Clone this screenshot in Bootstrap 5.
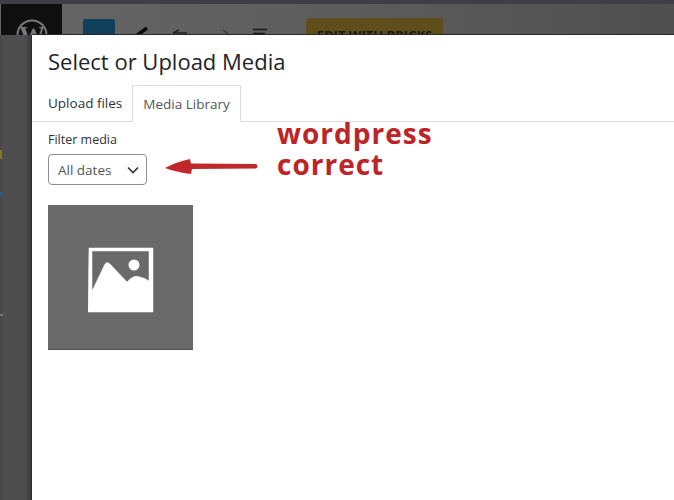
<!DOCTYPE html>
<html lang="en"><head><meta charset="utf-8"><title>Select or Upload Media</title>
<link href="https://cdn.jsdelivr.net/npm/bootstrap@5.3.0/dist/css/bootstrap.min.css" rel="stylesheet">
<style>
html,body{margin:0;height:500px;overflow:hidden;background:#4d4d4d}
body{font-family:"Open Sans","Noto Sans",sans-serif}
.stage{width:674px;height:500px;position:relative;overflow:hidden}
.topstrip{height:4px;background:#3e3e4a}
.editorbar{height:31px;background:linear-gradient(90deg,#666 0,#5e5e5e 300px,#4f4f4f 674px);overflow:hidden}
.wpbox{width:61px;height:31px;margin-left:1px;background:#0f0f0f;color:#7a7a7a;padding-top:15px}
.addbtn{width:32px;height:16px;margin:15px 0 0 21px;background:#10405c;border-radius:2px 2px 0 0}
.toolset{margin-left:20px;flex:none}
.brickbtn{width:137px;height:17px;margin:14px 0 0 31px;background:#5f4e1c;border-radius:3px 3px 0 0;font:700 13px/17px "Open Sans",sans-serif;color:#161616;padding-top:9px;text-align:center;white-space:nowrap;overflow:hidden;flex:none}
.lowerbg{height:465px;width:32px;background:
 linear-gradient(#8a7426,#8a7426) 0 115px/2px 9px no-repeat,
 linear-gradient(#2c5f94,#2c5f94) 0 157px/2px 4px no-repeat,
 linear-gradient(#777,#777) 0 279px/3px 2px no-repeat,
 linear-gradient(90deg,#454549 0,#4e4e4e 10%,#4e4e4e 75%,#3f3f3f 94%,#2c2c2c 100%)}
.dialog{position:absolute;left:32px;top:35px;width:642px;height:465px;background:#fff;color:#1d2327;box-shadow:0 -1px 0 #2a2a2a}
.dlgtitle{font-size:22px;font-weight:400;line-height:30px;margin:0;padding:11px 16px 9px;color:#1d2327;font-family:"Open Sans",sans-serif}
.tabrow{height:37px;border-bottom:1px solid #dcdcde;padding-left:8px}
.tabitem{font-size:13.5px;line-height:20px;padding:8px 10px 8px 8px;color:#2c3338}
.tabitem.current{border:1px solid #dcdcde;border-bottom:0;background:#fff;height:37px;padding:8px 10px;color:#50575e}
.filterarea{padding:9px 16px 0;position:relative}
.filterlabel{font-size:12.5px;font-weight:500;line-height:17px;color:#2c3338;margin:0 0 6px}
.dateselect{width:99px;height:31px;border:1px solid #8c8f94;border-radius:4px;font-size:13.5px;color:#50575e;padding:1px 7px 0 9px;background:#fff}
.thumbbox{width:145px;height:145px;background:#6a6a6a;border-bottom:1px solid #555;margin:20px 0 0 16px;padding-top:5px}
.notewords{position:absolute;left:245px;top:83px;color:#bd2427;font-weight:700;font-size:28px;line-height:31px;letter-spacing:1px;font-family:"Open Sans",sans-serif}
.arrowmark{position:absolute;left:132px;top:123px}
</style></head>
<body>
<div class="stage">
  <div class="topstrip"></div>
  <div class="editorbar d-flex align-items-start">
    <div class="wpbox d-flex justify-content-center">
      <svg width="32" height="32" viewBox="0 0 32 32"><circle cx="16" cy="16" r="14.5" fill="none" stroke="currentColor" stroke-width="2"/><text x="16" y="25" text-anchor="middle" font-family="Liberation Serif" font-weight="700" font-size="26" fill="currentColor">W</text></svg>
    </div>
    <div class="addbtn"></div>
    <svg class="toolset" width="140" height="31" viewBox="0 0 140 31"><path d="M1 32 12 24" stroke="#0c0c0c" stroke-width="3.5"/><path d="M38 29 44 26M38 29H52" stroke="#222" stroke-width="1.5" fill="none"/><path d="M88 26 93 30" stroke="#333" stroke-width="1.5" fill="none"/><path d="M118 25.5H132M118 29.5H130" stroke="#151515" stroke-width="1.6"/></svg>
    <div class="brickbtn">EDIT WITH BRICKS</div>
  </div>
  <div class="lowerbg"></div>
  <div class="dialog">
    <h1 class="dlgtitle">Select or Upload Media</h1>
    <div class="tabrow d-flex align-items-start">
      <div class="tabitem">Upload files</div>
      <div class="tabitem current">Media Library</div>
    </div>
    <div class="filterarea">
      <div class="filterlabel">Filter media</div>
      <div class="dateselect d-flex justify-content-between align-items-center">
        <span>All dates</span>
        <svg width="12" height="8" viewBox="0 0 12 8"><path d="M1 1.5 6 6.5 11 1.5" fill="none" stroke="#2c3338" stroke-width="1.6"/></svg>
      </div>
    </div>
    <div class="thumbbox d-flex align-items-center justify-content-center">
      <svg width="66" height="66" viewBox="0 0 66 66"><path fill="#fff" fill-rule="evenodd" stroke="#fff" stroke-width=".5" stroke-linejoin="round" d="M1 1H65V65H0ZM4 4V44L17 17Q19 14 22 17L39 35Q46 27 52 30Q57 31 61 34V4Z"/><circle cx="46" cy="18" r="5.5" fill="#fff"/></svg>
    </div>
    <div class="notewords">wordpress<br>correct</div>
    <svg class="arrowmark" width="96" height="18" viewBox="0 0 96 18"><path fill="#c0282b" d="M1 10Q12 4 26 1L27 5.5 92 6Q95 8 92 10.5L28 11 27 16Q12 14 1 10Z"/></svg>
  </div>
</div>
</body></html>
